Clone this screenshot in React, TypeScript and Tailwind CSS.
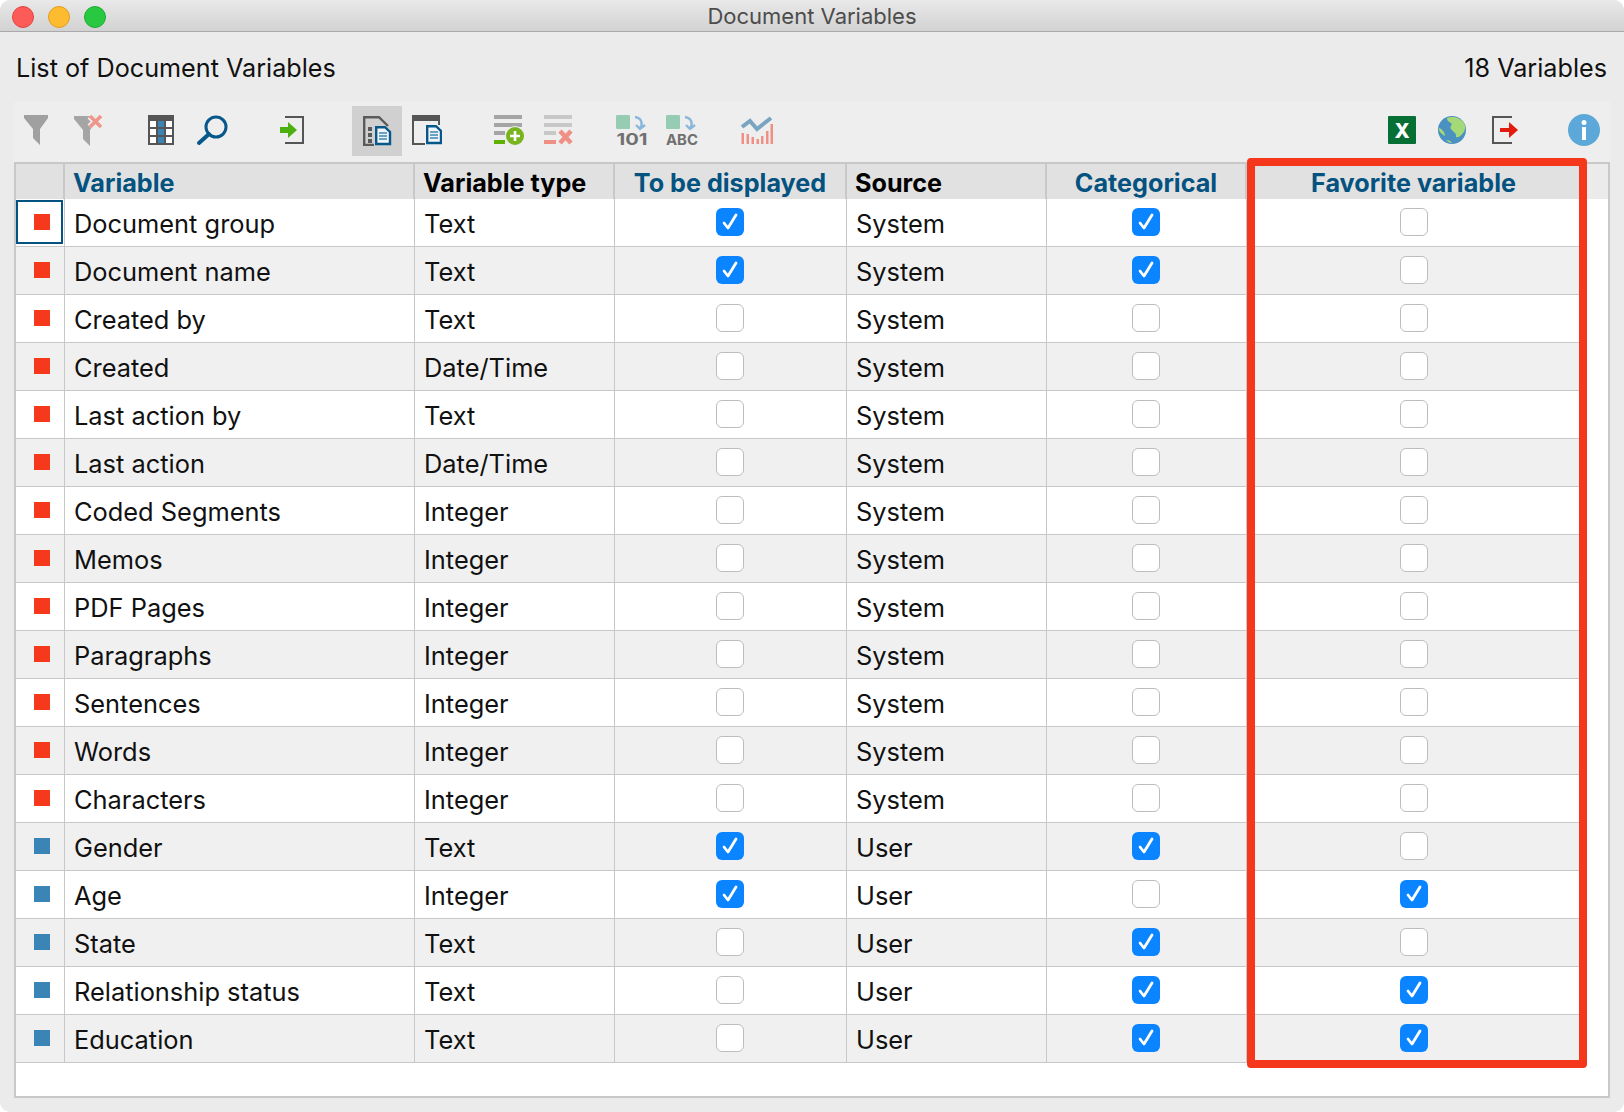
const rows: [string, string, boolean, string, boolean, boolean][] = [
  ["Document group", "Text", true, "System", true, false],
  ["Document name", "Text", true, "System", true, false],
  ["Created by", "Text", false, "System", false, false],
  ["Created", "Date/Time", false, "System", false, false],
  ["Last action by", "Text", false, "System", false, false],
  ["Last action", "Date/Time", false, "System", false, false],
  ["Coded Segments", "Integer", false, "System", false, false],
  ["Memos", "Integer", false, "System", false, false],
  ["PDF Pages", "Integer", false, "System", false, false],
  ["Paragraphs", "Integer", false, "System", false, false],
  ["Sentences", "Integer", false, "System", false, false],
  ["Words", "Integer", false, "System", false, false],
  ["Characters", "Integer", false, "System", false, false],
  ["Gender", "Text", true, "User", true, false],
  ["Age", "Integer", true, "User", false, true],
  ["State", "Text", false, "User", true, false],
  ["Relationship status", "Text", false, "User", true, true],
  ["Education", "Text", false, "User", true, true],
];

const columns = "grid grid-cols-[49px_350px_200px_232px_200px_200px_333px]";

function Checkbox({ checked }: { checked: boolean }) {
  if (checked) {
    return (
      <div className="w-[28px] h-[28px] rounded-[6px] bg-[#0a84ff]">
        <svg viewBox="0 0 28 28" className="w-[28px] h-[28px]">
          <path d="M8 15 L12 20 L20 7" fill="none" stroke="#fff" strokeWidth="2.8" strokeLinecap="round" strokeLinejoin="round" />
        </svg>
      </div>
    );
  }
  return <div className="w-[28px] h-[28px] rounded-[6px] bg-white border-[1.5px] border-[#bdbdbd]" />;
}

function HeadCell({ label, blue, center }: { label: string; blue?: boolean; center?: boolean }) {
  return (
    <div
      className={`h-[35px] pt-[4px] flex items-center border-r-2 border-[#c8c8c8] font-bold text-[25.2px] bg-[#e1e1e1] ${
        center ? "justify-center" : "pl-[8px]"
      } ${blue ? "text-[#04527f]" : "text-black"}`}
    >
      {label}
    </div>
  );
}

function Row({ row, index }: { row: (typeof rows)[number]; index: number }) {
  const [name, type, display, source, categorical, favorite] = row;
  const bg = index % 2 === 0 ? "bg-white" : "bg-[#f0f0f0]";
  const cell = "h-[47px] flex items-center border-r border-[#c8c8c8]";
  return (
    <div className={`${columns} h-[48px] w-[1564px] border-b border-[#c8c8c8] ${bg}`}>
      <div className={`${cell} relative pl-[18px] pb-[2px]`}>
        <div className={`w-[16px] h-[16px] ${index < 13 ? "bg-[#f6381c]" : "bg-[#3a85b5]"}`} />
        {index === 0 && <div className="absolute left-0 top-[1px] w-[47px] h-[44px] border-2 border-[#04527f]" />}
      </div>
      <div className={`${cell} pl-[9px] pt-[4px]`}>{name}</div>
      <div className={`${cell} pl-[9px] pt-[4px]`}>{type}</div>
      <div className={`${cell} justify-center pb-[2px] pr-[2px]`}>
        <Checkbox checked={display} />
      </div>
      <div className={`${cell} pl-[9px] pt-[4px]`}>{source}</div>
      <div className={`${cell} justify-center pb-[2px] pr-[2px]`}>
        <Checkbox checked={categorical} />
      </div>
      <div className="h-[47px] flex items-center justify-center pb-[2px]">
        <Checkbox checked={favorite} />
      </div>
    </div>
  );
}

function BlueDoc({ x, y }: { x: number; y: number }) {
  return (
    <g transform={`translate(${x} ${y})`}>
      <path d="M1.2 1.2 H10 L15 6 V18 H1.2 Z" fill="#f2f5f7" stroke="#07588a" strokeWidth="2.4" />
      <path d="M4 7 H12 M4 10 H12 M4 13 H12" stroke="#3a85b5" strokeWidth="1.7" />
    </g>
  );
}

function Toolbar() {
  return (
    <div className="ml-[14px] w-[1596px] h-[60px] pb-[4px] bg-[#eeeeee] flex items-center">
      <svg viewBox="0 0 24 30" className="w-[24px] h-[30px] ml-[10px]">
        <path d="M0 0 H24 V3 L16 14 V30 L9 23 V14 L0 3 Z" fill="#a0a0a0" />
      </svg>
      <svg viewBox="0 0 30 32" className="w-[30px] h-[32px] ml-[26px]">
        <path d="M0 2 H24 V5 L16 16 V32 L9 25 V16 L0 5 Z" fill="#a5a5a5" />
        <path d="M16 2 L27 13 M27 2 L16 13" stroke="#eeeeee" strokeWidth="7" />
        <path d="M16 2 L27 13 M27 2 L16 13" stroke="#f0958a" strokeWidth="3.6" />
      </svg>
      <svg viewBox="0 0 26 30" className="w-[26px] h-[30px] ml-[44px]">
        <rect width="26" height="30" fill="#555555" />
        <path d="M2 6 H8 V12 H2 Z M2 14 H8 V20 H2 Z M2 22 H8 V28 H2 Z M18 6 H24 V12 H18 Z M18 14 H24 V20 H18 Z M18 22 H24 V28 H18 Z" fill="#ffffff" />
        <path d="M10 6 H16 V12 H10 Z M10 14 H16 V20 H10 Z M10 22 H16 V28 H10 Z" fill="#3a85b5" />
      </svg>
      <svg viewBox="0 0 32 31" className="w-[32px] h-[31px] ml-[22px]">
        <circle cx="20" cy="12" r="10" fill="none" stroke="#07588a" strokeWidth="3" />
        <path d="M13 19 L3 28" stroke="#07588a" strokeWidth="4" strokeLinecap="round" />
      </svg>
      <svg viewBox="0 0 24 28" className="w-[24px] h-[28px] ml-[52px]">
        <path d="M5 1 H23 V27 H5" fill="none" stroke="#555555" strokeWidth="2" />
        <path d="M0 11 H8 V6 L17 14 L8 22 V17 H0 Z" fill="#4cb010" />
      </svg>
      <div className="w-[50px] h-[50px] ml-[48px] mt-[2px] bg-[#d0d0d0] flex items-center justify-center">
        <svg viewBox="0 0 29 30" className="w-[29px] h-[30px]">
          <path d="M11 29 H1.2 V1.2 H16 L25 10" fill="none" stroke="#5a5a5a" strokeWidth="2.4" />
          <path d="M5 11 H9 V15 H5 Z M5 17 H9 V21 H5 Z M5 23 H9 V27 H5 Z" fill="#5a5a5a" />
          <BlueDoc x={12} y={10} />
        </svg>
      </div>
      <svg viewBox="0 0 30 30" className="w-[30px] h-[30px] ml-[10px]">
        <path d="M0 0 H28 V6 H0 Z" fill="#555555" />
        <path d="M1 6 V29 H13 M27 6 V10" fill="none" stroke="#555555" strokeWidth="2" />
        <BlueDoc x={14} y={10} />
      </svg>
      <svg viewBox="0 0 30 30" className="w-[30px] h-[30px] ml-[52px]">
        <path d="M0 0 H28 V4 H0 Z M0 8 H28 V12 H0 Z M0 16 H11 V20 H0 Z" fill="#a5a5a5" />
        <path d="M0 25 H11 V29 H0 Z" fill="#5fb000" />
        <circle cx="21" cy="21" r="10" fill="#eeeeee" />
        <circle cx="21" cy="21" r="9" fill="#78b41e" />
        <path d="M21 16 V26 M16 21 H26" stroke="#fff" strokeWidth="2.6" />
      </svg>
      <svg viewBox="0 0 30 30" className="w-[30px] h-[30px] ml-[20px]">
        <path d="M0 0 H28 V4 H0 Z M0 8 H28 V12 H0 Z M0 16 H12 V20 H0 Z" fill="#c8c8c8" />
        <path d="M0 25 H12 V29 H0 Z" fill="#ef8f85" />
        <path d="M16 16 L27 28 M27 16 L16 28" stroke="#ef8f85" strokeWidth="4.5" />
      </svg>
      <svg viewBox="0 0 32 38" className="w-[32px] h-[38px] ml-[42px] mb-[-7px]">
        <rect width="14" height="14" rx="1" fill="#96ccb4" />
        <path d="M19 2 C26 3 27 9 24 13 M20 10 L24 14 L29 10" fill="none" stroke="#8ab8dc" strokeWidth="2.4" />
        <text x="0.5" y="30" textLength="31" lengthAdjust="spacingAndGlyphs" fontFamily="Inter, sans-serif" fontWeight="700" fontSize="16.5" fill="#707070">101</text>
      </svg>
      <svg viewBox="0 0 32 38" className="w-[32px] h-[38px] ml-[18px] mb-[-7px]">
        <rect width="14" height="14" rx="1" fill="#96ccb4" />
        <path d="M19 2 C26 3 27 9 24 13 M20 10 L24 14 L29 10" fill="none" stroke="#8ab8dc" strokeWidth="2.4" />
        <text x="0" y="30" textLength="32" lengthAdjust="spacingAndGlyphs" fontFamily="Inter, sans-serif" fontWeight="700" fontSize="15" fill="#707070">ABC</text>
      </svg>
      <svg viewBox="0 0 32 28" className="w-[32px] h-[28px] ml-[43px]">
        <path d="M0.5 17 H3 V28 H0.5 Z M5.5 18 H8 V28 H5.5 Z M10.5 21 H13 V28 H10.5 Z M15.5 23 H18 V28 H15.5 Z M20 20 H22.5 V28 H20 Z M25 15 H27.5 V28 H25 Z M29.5 8 H32 V28 H29.5 Z" fill="#ef8f85" />
        <path d="M1 11 L9 5 L16 13 L30 2" fill="none" stroke="#7aa5c2" strokeWidth="4" />
      </svg>

      <svg viewBox="0 0 28 28" className="w-[28px] h-[28px] ml-auto">
        <rect width="28" height="28" rx="1" fill="#056f34" />
        <text x="14" y="22" textAnchor="middle" fontFamily="Inter, sans-serif" fontWeight="800" fontSize="20" fill="#fff">X</text>
      </svg>
      <svg viewBox="0 0 28 28" className="w-[28px] h-[28px] ml-[22px]">
        <circle cx="14" cy="14" r="14" fill="#4a90c0" />
        <path d="M9 2 C14 0 22 1 26 7 C28 11 27 15 25 17 C23 20 20 22 18 21 C19 17 15 16 13 13 C11 11 15 9 13 7 C11 6 9 5 9 2 Z" fill="#a5d877" />
        <path d="M1 12 C4 13 7 16 7 20 C5 19 2 17 1 14 Z M8 24 C11 24 13 25 14 27 C12 27 10 26 8 24 Z" fill="#a5d877" />
      </svg>
      <svg viewBox="0 0 26 28" className="w-[26px] h-[28px] ml-[26px]">
        <path d="M20 1 H1 V27 H20" fill="none" stroke="#555555" strokeWidth="2" />
        <path d="M8 12 H17 V6 L26 14 L17 22 V16 H8 Z" fill="#e31b0e" />
      </svg>
      <svg viewBox="0 0 32 32" className="w-[32px] h-[32px] ml-[50px] mr-[10px]">
        <circle cx="16" cy="16" r="16" fill="#5ca8d8" />
        <circle cx="16" cy="8.5" r="2.5" fill="#fff" />
        <rect x="14" y="13" width="4" height="13" fill="#fff" />
      </svg>
    </div>
  );
}

export default function App() {
  return (
    <div className="relative w-[1624px] h-[1112px] overflow-hidden rounded-[10px] bg-[#ebebeb] text-[25.4px] text-[#111111] font-['Inter',sans-serif]">
      <div className="grid grid-cols-[1fr_auto_1fr] items-center h-[32px] border-b border-[#a9a9a9] bg-gradient-to-b from-[#e9e9e9] to-[#d2d2d2]">
        <div className="flex gap-[14px] pl-[12px]">
          <div className="w-[22px] h-[22px] rounded-full bg-[#fc5b57] border border-[#e3443f]" />
          <div className="w-[22px] h-[22px] rounded-full bg-[#fdbc2f] border border-[#e09e21]" />
          <div className="w-[22px] h-[22px] rounded-full bg-[#28c840] border border-[#1fab31]" />
        </div>
        <div className="text-[22px] text-[#4c4c4c] mb-[1px]">Document Variables</div>
        <div />
      </div>

      <div className="h-[70px] flex items-center justify-between pl-[16px] pr-[17px] pt-[4px] text-[25.2px]">
        <span>List of Document Variables</span>
        <span>18 Variables</span>
      </div>

      <Toolbar />

      <div className="ml-[14px] w-[1596px] h-[936px] border-2 border-[#c8c8c8] bg-white">
        <div className="bg-[#ebebeb]">
          <div className={`${columns} w-[1564px]`}>
            <HeadCell label="" />
            <HeadCell label="Variable" blue />
            <HeadCell label="Variable type" />
            <HeadCell label="To be displayed" blue center />
            <HeadCell label="Source" />
            <HeadCell label="Categorical" blue center />
            <div className="h-[35px] pt-[4px] flex items-center justify-center font-bold text-[25.2px] bg-[#e1e1e1] text-[#04527f]">
              Favorite variable
            </div>
          </div>
        </div>
        {rows.map((row, i) => (
          <Row key={row[0]} row={row} index={i} />
        ))}
      </div>

      <div className="absolute left-[1247px] top-[158px] w-[340px] h-[910px] border-8 border-[#f5381c] rounded-[4px]" />
    </div>
  );
}
